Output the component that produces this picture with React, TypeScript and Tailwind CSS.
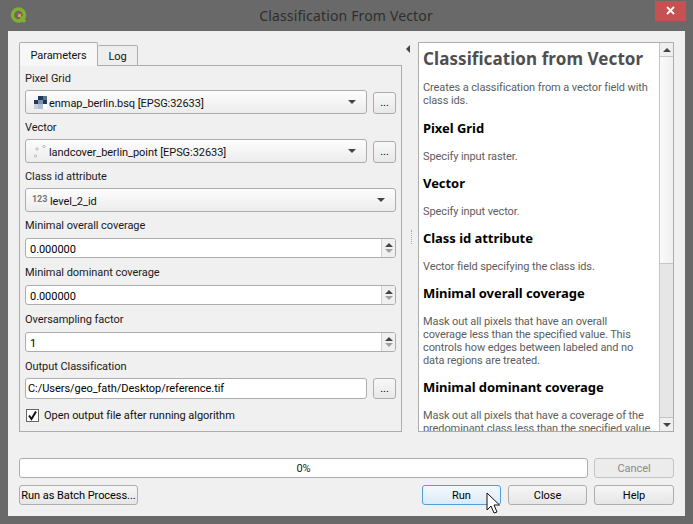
/**
 * Classification From Vector — QGIS processing dialog (Windows 8 style chrome).
 */
import type { ReactNode } from "react";

const labelCls = "h-[14px] leading-[16px] text-[#1a1a1a] whitespace-nowrap";

function QgisLogo() {
  return (
    <svg width="18" height="20" viewBox="0 0 18 20" className="shrink-0">
      <circle cx="8.500" cy="9" r="6" fill="none" stroke="#7fb02f" strokeWidth="3.4" />
      <path d="M11 11l4 5" stroke="#7fb02f" strokeWidth="3.4" />
      <rect x="8" y="8" width="3" height="3" fill="#e8a23c" />
      <rect x="7" y="7" width="2" height="2" fill="#d8533a" />
    </svg>
  );
}

function RasterIcon() {
  const cells = ["#f2f4f7", "#22385a", "#5b7089", "#22385a", "#7d93ab", "#22385a", "#c3d0de", "#a9c0d8", "#fbfcfd"];
  return (
    <span className="grid grid-cols-3 w-[13px] h-[13px] shrink-0">
      {cells.map((c, i) => (
        <span key={i} className="block" style={{ background: c }} />
      ))}
    </span>
  );
}

function PointIcon() {
  return (
    <svg width="13" height="13" viewBox="0 0 13 13" className="shrink-0">
      <circle cx="1.500" cy="11" r="1.200" fill="#eee" stroke="#aaa" strokeWidth="0.7" />
      <circle cx="3" cy="4" r="1.200" fill="#eee" stroke="#aaa" strokeWidth="0.7" />
      <circle cx="10" cy="1.500" r="1.200" fill="#eee" stroke="#aaa" strokeWidth="0.7" />
    </svg>
  );
}

function Combo({ children }: { children: ReactNode }) {
  return (
    <div className="flex-1 min-w-0 h-[24px] flex items-center pl-[8px] pr-[10px] gap-[2px] rounded-[3px] border border-[#adadad] bg-gradient-to-b from-[#fdfdfd] to-[#ececec]">
      {children}
      <span className="ml-auto w-0 h-0 border-x-[4px] border-x-transparent border-t-[4px] border-t-[#444]" />
    </div>
  );
}

function DotsButton() {
  return (
    <button className="w-[23px] h-[22px] mt-[2px] shrink-0 rounded-[3px] border border-[#adadad] bg-gradient-to-b from-[#f8f8f8] to-[#e8e8e8] text-[11px] leading-[20px]">
      ...
    </button>
  );
}

function Spin({ value }: { value: string }) {
  return (
    <div className="h-[20px] flex rounded-[3px] border border-[#adadad] bg-white overflow-hidden">
      <div className="flex-1 pl-[4px] leading-[22px] text-black">{value}</div>
      <div className="w-[14px] flex flex-col items-center justify-center gap-[2px] border-l border-[#d0d0d0] bg-[#f0f0f0]">
        <span className="w-0 h-0 border-x-[4px] border-x-transparent border-b-[4px] border-b-[#444]" />
        <span className="w-0 h-0 border-x-[4px] border-x-transparent border-t-[4px] border-t-[#a0a0a0]" />
      </div>
    </div>
  );
}

function PushButton({ children, className = "" }: { children: ReactNode; className?: string }) {
  return (
    <button
      className={`h-[20px] leading-[20px] whitespace-nowrap rounded-[3px] border border-[#adadad] bg-gradient-to-b from-[#f6f6f6] to-[#e6e6e6] text-black ${className}`}
    >
      {children}
    </button>
  );
}

function HelpBlock({ title, children }: { title: string; children: ReactNode }) {
  return (
    <div>
      <div
        className="mt-[13px] h-[15px] leading-[15px] text-[13px] font-bold text-black whitespace-nowrap"
        style={{ fontFamily: '"Noto Sans", sans-serif' }}
      >
        {title}
      </div>
      <div className="mt-[14px] leading-[13px] tracking-[-0.1px] text-[#5d5d5d] whitespace-nowrap">{children}</div>
    </div>
  );
}

export default function App() {
  return (
    <div
      className="relative w-[693px] h-[524px] overflow-hidden bg-[#696969] flex flex-col text-[11px] tracking-[-0.05px]"
      style={{ fontFamily: 'Roboto, "Noto Sans", sans-serif' }}
    >
      {/* title bar */}
      <div className="h-[31px] shrink-0 flex items-center pl-[10px] pr-[7px] relative">
        <QgisLogo />
        <div
          className="flex-1 text-center text-[14px] tracking-[0.15px] text-[#2e2e2e] pl-[9px]"
          style={{ fontFamily: '"Noto Sans", sans-serif' }}
        >
          Classification From Vector
        </div>
        <div className="w-[31px] h-[20px] -mt-[10px] flex items-center justify-center bg-[#c75050] text-white">
          <svg width="9" height="9" viewBox="0 0 9 9">
            <path d="M1 1l7 7M8 1L1 8" stroke="#fff" strokeWidth="1.8" />
          </svg>
        </div>
      </div>

      {/* client area */}
      <div className="mx-[8px] mb-[8px] flex-1 bg-[#f0f0f0] pt-[11px] px-[11px] flex flex-col min-h-0">
        <div className="flex h-[390px] shrink-0">
          {/* parameters */}
          <div className="w-[383px] flex flex-col shrink-0">
            <div className="flex h-[24px] items-end relative z-10 -mb-px">
              <div className="w-[79px] h-[24px] bg-[#f7f7f7] border border-b-0 border-[#adadad] rounded-t-[2px] text-center leading-[26px] text-[#111]">
                Parameters
              </div>
              <div className="w-[40px] h-[21px] bg-[#eeeeee] border border-l-0 border-b-[#adadad] border-[#adadad] rounded-t-[2px] text-center leading-[21px] text-[#111]">
                Log
              </div>
            </div>
            <div className="flex-1 border border-[#adadad] bg-[#f0f0f0] px-[5px] pt-[5px] flex flex-col">
              <div className={labelCls}>Pixel Grid</div>
              <div className="flex gap-[6px] mt-[5px]">
                <Combo>
                  <RasterIcon />
                  <span className="text-[#111] pt-[4px]">enmap_berlin.bsq [EPSG:32633]</span>
                </Combo>
                <DotsButton />
              </div>
              <div className={`${labelCls} mt-[6px]`}>Vector</div>
              <div className="flex gap-[6px] mt-[5px]">
                <Combo>
                  <PointIcon />
                  <span className="text-[#111] pt-[4px]">landcover_berlin_point [EPSG:32633]</span>
                </Combo>
                <DotsButton />
              </div>
              <div className={`${labelCls} mt-[6px]`}>Class id attribute</div>
              <div className="flex mt-[5px]">
                <Combo>
                  <span className="-ml-[2px] -mr-[2px] w-[18px] text-[9px] font-bold text-[#777]">123</span>
                  <span className="text-[#111] pt-[4px]">level_2_id</span>
                </Combo>
              </div>
              <div className={`${labelCls} mt-[6px]`}>Minimal overall coverage</div>
              <div className="mt-[6px]">
                <Spin value="0.000000" />
              </div>
              <div className={`${labelCls} mt-[7px]`}>Minimal dominant coverage</div>
              <div className="mt-[6px]">
                <Spin value="0.000000" />
              </div>
              <div className={`${labelCls} mt-[7px]`}>Oversampling factor</div>
              <div className="mt-[6px]">
                <Spin value="1" />
              </div>
              <div className={`${labelCls} mt-[7px]`}>Output Classification</div>
              <div className="flex gap-[6px] mt-[5px]">
                <div className="flex-1 h-[21px] rounded-[3px] border border-[#adadad] bg-white pl-[2px] leading-[19px] text-black">
                  C:/Users/geo_fath/Desktop/reference.tif
                </div>
                <button className="w-[23px] h-[21px] shrink-0 rounded-[3px] border border-[#adadad] bg-gradient-to-b from-[#f8f8f8] to-[#e8e8e8] leading-[19px]">
                  ...
                </button>
              </div>
              <div className="flex items-center gap-[5px] mt-[8px] h-[16px]">
                <span className="w-[13px] h-[13px] ml-[1px] border border-[#666] bg-white flex items-center justify-center">
                  <svg width="11" height="11" viewBox="0 0 11 11">
                    <path d="M2 5.500l2.500 3.500L9 1.500" fill="none" stroke="#111" strokeWidth="2" />
                  </svg>
                </span>
                <span className="text-[#111] pt-[2px]">Open output file after running algorithm</span>
              </div>
            </div>
          </div>

          {/* splitter */}
          <div className="w-[16px] shrink-0 flex flex-col items-center">
            <span className="mt-[3px] w-0 h-0 border-y-[4px] border-y-transparent border-r-[4px] border-r-[#444] -ml-[4px]" />
            <span className="mt-[177px] ml-[3px] h-[14px] border-l border-dotted border-[#aaa]" />
          </div>

          {/* help */}
          <div className="flex-1 min-w-0 flex border border-[#adadad] bg-white">
            <div className="flex-1 min-w-0 overflow-hidden pl-[4px] pr-[2px]">
              <div
                className="mt-[5px] h-[22px] leading-[22px] text-[17px] tracking-[0.08px] font-bold text-[#4f4f4f] whitespace-nowrap"
                style={{ fontFamily: '"Noto Sans", sans-serif' }}
              >
                Classification from Vector
              </div>
              <div className="mt-[11px] mb-[14px] leading-[13px] tracking-[-0.1px] text-[#5d5d5d] whitespace-nowrap">
                Creates a classification from a vector field with
                <br />
                class ids.
              </div>
              <HelpBlock title="Pixel Grid">Specify input raster.</HelpBlock>
              <HelpBlock title="Vector">Specify input vector.</HelpBlock>
              <HelpBlock title="Class id attribute">Vector field specifying the class ids.</HelpBlock>
              <HelpBlock title="Minimal overall coverage">
                Mask out all pixels that have an overall
                <br />
                coverage less than the specified value. This
                <br />
                controls how edges between labeled and no
                <br />
                data regions are treated.
              </HelpBlock>
              <HelpBlock title="Minimal dominant coverage">
                Mask out all pixels that have a coverage of the
                <br />
                predominant class less than the specified value.
              </HelpBlock>
            </div>
            {/* scrollbar */}
            <div className="w-[14px] shrink-0 flex flex-col border-l border-[#c4c4c4] bg-[#e6e6e6]">
              <div className="h-[14px] bg-[#efefef] border-b border-[#c4c4c4] flex items-center justify-center">
                <span className="w-0 h-0 border-x-[4px] border-x-transparent border-b-[4px] border-b-[#444]" />
              </div>
              <div className="h-[207px] bg-gradient-to-r from-[#fafafa] to-[#f0f0f0] border-b border-[#c4c4c4]" />
              <div className="flex-1" />
              <div className="h-[14px] bg-[#efefef] border-t border-[#c4c4c4] flex items-center justify-center">
                <span className="w-0 h-0 border-x-[4px] border-x-transparent border-t-[4px] border-t-[#444]" />
              </div>
            </div>
          </div>
        </div>

        {/* progress + cancel */}
        <div className="flex gap-[6px] mt-[26px] shrink-0">
          <div className="w-[569px] h-[20px] rounded-[3px] border border-[#adadad] bg-white text-center leading-[20px] text-[#222]">
            0%
          </div>
          <button className="flex-1 h-[20px] leading-[20px] rounded-[3px] border border-[#c4c4c4] bg-[#ececec] text-[#8a8a8a]">
            Cancel
          </button>
        </div>

        {/* buttons */}
        <div className="flex gap-[7px] mt-[7px] shrink-0">
          <PushButton className="w-[119px] mr-auto">Run as Batch Process...</PushButton>
          <button className="w-[79px] h-[20px] leading-[20px] rounded-[3px] border border-[#4f9fdc] bg-gradient-to-b from-[#f4f9fd] to-[#dcebf7] text-black">
            Run
          </button>
          <PushButton className="w-[79px]">Close</PushButton>
          <PushButton className="w-[80px]">Help</PushButton>
        </div>
      </div>

      {/* mouse cursor */}
      <svg width="16" height="24" viewBox="0 0 16 24" className="absolute left-[486px] top-[492px]">
        <path
          d="M1 1v17l4-4 3 7 3-1-3-7h5.500z"
          fill="#fff"
          stroke="#111"
          strokeWidth="1"
          strokeLinejoin="round"
        />
      </svg>
    </div>
  );
}
